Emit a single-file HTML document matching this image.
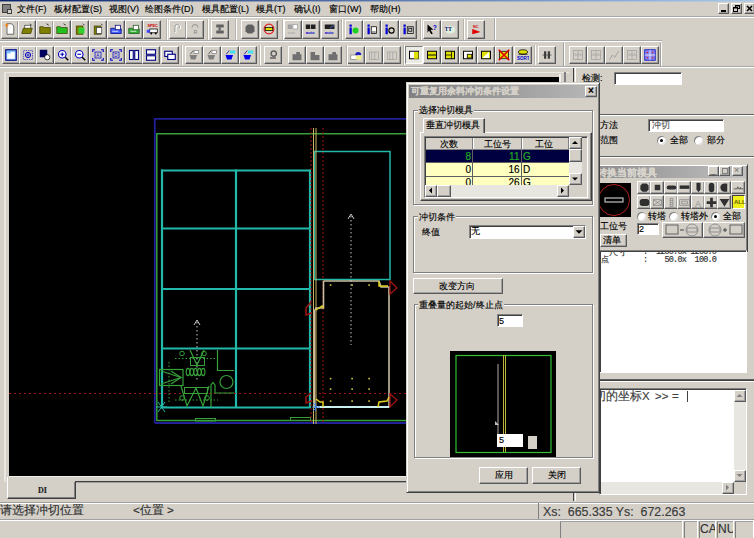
<!DOCTYPE html><html><head><meta charset="utf-8"><style>
html,body{margin:0;padding:0;}
body{width:754px;height:538px;overflow:hidden;position:relative;background:#d4d0c8;font-family:"Liberation Sans", sans-serif;-webkit-text-stroke:0.15px;}
</style></head><body>
<div style="position:absolute;left:0px;top:0px;width:754px;height:1px;background:linear-gradient(90deg,#0a246a,#a6caf0)"></div>
<div style="position:absolute;left:0px;top:1px;width:754px;height:1px;background:linear-gradient(90deg,#0a246a,#a6caf0);opacity:0.45"></div>
<div style="position:absolute;left:0px;top:16px;width:754px;height:1px;background:#a8a8a8"></div>
<div style="position:absolute;left:0px;top:17px;width:754px;height:1px;background:#fff"></div>
<div style="position:absolute;left:2px;top:4px;width:9px;height:9px;background:#808080;border:1px solid #404040;box-sizing:border-box"></div>
<div style="position:absolute;left:7px;top:9px;width:5px;height:5px;background:#d4d0c8;border:1px solid #404040;box-sizing:border-box"></div>
<div style="position:absolute;left:17px;top:5px;font-size:9px;line-height:1;color:#000;white-space:nowrap;">文件(F)</div>
<div style="position:absolute;left:54px;top:5px;font-size:9px;line-height:1;color:#000;white-space:nowrap;">板材配置(S)</div>
<div style="position:absolute;left:109px;top:5px;font-size:9px;line-height:1;color:#000;white-space:nowrap;">视图(V)</div>
<div style="position:absolute;left:145px;top:5px;font-size:9px;line-height:1;color:#000;white-space:nowrap;">绘图条件(D)</div>
<div style="position:absolute;left:202px;top:5px;font-size:9px;line-height:1;color:#000;white-space:nowrap;">模具配置(L)</div>
<div style="position:absolute;left:256px;top:5px;font-size:9px;line-height:1;color:#000;white-space:nowrap;">模具(T)</div>
<div style="position:absolute;left:294px;top:5px;font-size:9px;line-height:1;color:#000;white-space:nowrap;">确认(I)</div>
<div style="position:absolute;left:329px;top:5px;font-size:9px;line-height:1;color:#000;white-space:nowrap;">窗口(W)</div>
<div style="position:absolute;left:370px;top:5px;font-size:9px;line-height:1;color:#000;white-space:nowrap;">帮助(H)</div>
<div style="position:absolute;left:718px;top:3px;width:11px;height:11px;box-sizing:border-box;background:#d4d0c8;border-top:1px solid #fff;border-left:1px solid #fff;border-right:1px solid #5a5a5a;border-bottom:1px solid #5a5a5a;box-shadow:inset -1px -1px 0 #a0a0a0"></div>
<div style="position:absolute;left:731px;top:3px;width:11px;height:11px;box-sizing:border-box;background:#d4d0c8;border-top:1px solid #fff;border-left:1px solid #fff;border-right:1px solid #5a5a5a;border-bottom:1px solid #5a5a5a;box-shadow:inset -1px -1px 0 #a0a0a0"></div>
<div style="position:absolute;left:744px;top:3px;width:11px;height:11px;box-sizing:border-box;background:#d4d0c8;border-top:1px solid #fff;border-left:1px solid #fff;border-right:1px solid #5a5a5a;border-bottom:1px solid #5a5a5a;box-shadow:inset -1px -1px 0 #a0a0a0"></div>
<div style="position:absolute;left:721px;top:10px;width:5px;height:2px;background:#000"></div>
<svg style="position:absolute;left:731px;top:3px" width="11" height="11"><rect x="4.5" y="2.5" width="4" height="3" fill="none" stroke="#000"/><rect x="2.5" y="4.5" width="4" height="4" fill="#d4d0c8" stroke="#000"/><path d="M2 5h5M4 3h5" stroke="#000"/></svg>
<svg style="position:absolute;left:744px;top:3px" width="11" height="11"><path d="M3 3l5 5M8 3l-5 5" stroke="#000" stroke-width="1.6"/></svg>
<div style="position:absolute;left:0px;top:40px;width:662px;height:1px;background:#a8a8a8"></div>
<div style="position:absolute;left:0px;top:41px;width:662px;height:1px;background:#fff"></div>
<div style="position:absolute;left:0px;top:66px;width:754px;height:1px;background:#a8a8a8"></div>
<div style="position:absolute;left:0px;top:67px;width:754px;height:1px;background:#fff"></div>
<div style="position:absolute;left:494px;top:18px;width:1px;height:22px;background:#a8a8a8"></div>
<div style="position:absolute;left:495px;top:18px;width:1px;height:22px;background:#fff"></div>
<div style="position:absolute;left:1px;top:20px;width:18px;height:19px;box-sizing:border-box;background:#d4d0c8;border-top:1px solid #fff;border-left:1px solid #fff;border-right:1px solid #5a5a5a;border-bottom:1px solid #5a5a5a;box-shadow:inset -1px -1px 0 #a0a0a0"></div>
<div style="position:absolute;left:18px;top:20px;width:18px;height:19px;box-sizing:border-box;background:#d4d0c8;border-top:1px solid #fff;border-left:1px solid #fff;border-right:1px solid #5a5a5a;border-bottom:1px solid #5a5a5a;box-shadow:inset -1px -1px 0 #a0a0a0"></div>
<div style="position:absolute;left:36px;top:20px;width:18px;height:19px;box-sizing:border-box;background:#d4d0c8;border-top:1px solid #fff;border-left:1px solid #fff;border-right:1px solid #5a5a5a;border-bottom:1px solid #5a5a5a;box-shadow:inset -1px -1px 0 #a0a0a0"></div>
<div style="position:absolute;left:53px;top:20px;width:18px;height:19px;box-sizing:border-box;background:#d4d0c8;border-top:1px solid #fff;border-left:1px solid #fff;border-right:1px solid #5a5a5a;border-bottom:1px solid #5a5a5a;box-shadow:inset -1px -1px 0 #a0a0a0"></div>
<div style="position:absolute;left:71px;top:20px;width:18px;height:19px;box-sizing:border-box;background:#d4d0c8;border-top:1px solid #fff;border-left:1px solid #fff;border-right:1px solid #5a5a5a;border-bottom:1px solid #5a5a5a;box-shadow:inset -1px -1px 0 #a0a0a0"></div>
<div style="position:absolute;left:89px;top:20px;width:18px;height:19px;box-sizing:border-box;background:#d4d0c8;border-top:1px solid #fff;border-left:1px solid #fff;border-right:1px solid #5a5a5a;border-bottom:1px solid #5a5a5a;box-shadow:inset -1px -1px 0 #a0a0a0"></div>
<div style="position:absolute;left:107px;top:20px;width:18px;height:19px;box-sizing:border-box;background:#d4d0c8;border-top:1px solid #fff;border-left:1px solid #fff;border-right:1px solid #5a5a5a;border-bottom:1px solid #5a5a5a;box-shadow:inset -1px -1px 0 #a0a0a0"></div>
<div style="position:absolute;left:125px;top:20px;width:18px;height:19px;box-sizing:border-box;background:#d4d0c8;border-top:1px solid #fff;border-left:1px solid #fff;border-right:1px solid #5a5a5a;border-bottom:1px solid #5a5a5a;box-shadow:inset -1px -1px 0 #a0a0a0"></div>
<div style="position:absolute;left:143px;top:20px;width:18px;height:19px;box-sizing:border-box;background:#d4d0c8;border-top:1px solid #fff;border-left:1px solid #fff;border-right:1px solid #5a5a5a;border-bottom:1px solid #5a5a5a;box-shadow:inset -1px -1px 0 #a0a0a0"></div>
<div style="position:absolute;left:169px;top:20px;width:18px;height:19px;box-sizing:border-box;background:#d4d0c8;border-top:1px solid #fff;border-left:1px solid #fff;border-right:1px solid #5a5a5a;border-bottom:1px solid #5a5a5a;box-shadow:inset -1px -1px 0 #a0a0a0"></div>
<div style="position:absolute;left:186px;top:20px;width:18px;height:19px;box-sizing:border-box;background:#d4d0c8;border-top:1px solid #fff;border-left:1px solid #fff;border-right:1px solid #5a5a5a;border-bottom:1px solid #5a5a5a;box-shadow:inset -1px -1px 0 #a0a0a0"></div>
<div style="position:absolute;left:211px;top:20px;width:18px;height:19px;box-sizing:border-box;background:#d4d0c8;border-top:1px solid #fff;border-left:1px solid #fff;border-right:1px solid #5a5a5a;border-bottom:1px solid #5a5a5a;box-shadow:inset -1px -1px 0 #a0a0a0"></div>
<div style="position:absolute;left:241px;top:20px;width:18px;height:19px;box-sizing:border-box;background:#d4d0c8;border-top:1px solid #fff;border-left:1px solid #fff;border-right:1px solid #5a5a5a;border-bottom:1px solid #5a5a5a;box-shadow:inset -1px -1px 0 #a0a0a0"></div>
<div style="position:absolute;left:260px;top:20px;width:18px;height:19px;box-sizing:border-box;background:#d4d0c8;border-top:1px solid #fff;border-left:1px solid #fff;border-right:1px solid #5a5a5a;border-bottom:1px solid #5a5a5a;box-shadow:inset -1px -1px 0 #a0a0a0"></div>
<div style="position:absolute;left:284px;top:20px;width:18px;height:19px;box-sizing:border-box;background:#d4d0c8;border-top:1px solid #fff;border-left:1px solid #fff;border-right:1px solid #5a5a5a;border-bottom:1px solid #5a5a5a;box-shadow:inset -1px -1px 0 #a0a0a0"></div>
<div style="position:absolute;left:302px;top:20px;width:18px;height:19px;box-sizing:border-box;background:#d4d0c8;border-top:1px solid #fff;border-left:1px solid #fff;border-right:1px solid #5a5a5a;border-bottom:1px solid #5a5a5a;box-shadow:inset -1px -1px 0 #a0a0a0"></div>
<div style="position:absolute;left:321px;top:20px;width:18px;height:19px;box-sizing:border-box;background:#d4d0c8;border-top:1px solid #fff;border-left:1px solid #fff;border-right:1px solid #5a5a5a;border-bottom:1px solid #5a5a5a;box-shadow:inset -1px -1px 0 #a0a0a0"></div>
<div style="position:absolute;left:345px;top:20px;width:18px;height:19px;box-sizing:border-box;background:#d4d0c8;border-top:1px solid #fff;border-left:1px solid #fff;border-right:1px solid #5a5a5a;border-bottom:1px solid #5a5a5a;box-shadow:inset -1px -1px 0 #a0a0a0"></div>
<div style="position:absolute;left:363px;top:20px;width:18px;height:19px;box-sizing:border-box;background:#d4d0c8;border-top:1px solid #fff;border-left:1px solid #fff;border-right:1px solid #5a5a5a;border-bottom:1px solid #5a5a5a;box-shadow:inset -1px -1px 0 #a0a0a0"></div>
<div style="position:absolute;left:381px;top:20px;width:18px;height:19px;box-sizing:border-box;background:#d4d0c8;border-top:1px solid #fff;border-left:1px solid #fff;border-right:1px solid #5a5a5a;border-bottom:1px solid #5a5a5a;box-shadow:inset -1px -1px 0 #a0a0a0"></div>
<div style="position:absolute;left:399px;top:20px;width:18px;height:19px;box-sizing:border-box;background:#d4d0c8;border-top:1px solid #fff;border-left:1px solid #fff;border-right:1px solid #5a5a5a;border-bottom:1px solid #5a5a5a;box-shadow:inset -1px -1px 0 #a0a0a0"></div>
<div style="position:absolute;left:423px;top:20px;width:18px;height:19px;box-sizing:border-box;background:#d4d0c8;border-top:1px solid #fff;border-left:1px solid #fff;border-right:1px solid #5a5a5a;border-bottom:1px solid #5a5a5a;box-shadow:inset -1px -1px 0 #a0a0a0"></div>
<div style="position:absolute;left:441px;top:20px;width:18px;height:19px;box-sizing:border-box;background:#d4d0c8;border-top:1px solid #fff;border-left:1px solid #fff;border-right:1px solid #5a5a5a;border-bottom:1px solid #5a5a5a;box-shadow:inset -1px -1px 0 #a0a0a0"></div>
<div style="position:absolute;left:467px;top:20px;width:18px;height:19px;box-sizing:border-box;background:#d4d0c8;border-top:1px solid #fff;border-left:1px solid #fff;border-right:1px solid #5a5a5a;border-bottom:1px solid #5a5a5a;box-shadow:inset -1px -1px 0 #a0a0a0"></div>
<div style="position:absolute;left:166px;top:19px;width:1px;height:21px;background:#b8b4ac"></div>
<div style="position:absolute;left:167px;top:19px;width:1px;height:21px;background:#fff"></div>
<div style="position:absolute;left:207px;top:19px;width:1px;height:21px;background:#b8b4ac"></div>
<div style="position:absolute;left:208px;top:19px;width:1px;height:21px;background:#fff"></div>
<div style="position:absolute;left:235px;top:19px;width:1px;height:21px;background:#b8b4ac"></div>
<div style="position:absolute;left:236px;top:19px;width:1px;height:21px;background:#fff"></div>
<div style="position:absolute;left:282px;top:19px;width:1px;height:21px;background:#b8b4ac"></div>
<div style="position:absolute;left:283px;top:19px;width:1px;height:21px;background:#fff"></div>
<div style="position:absolute;left:341px;top:19px;width:1px;height:21px;background:#b8b4ac"></div>
<div style="position:absolute;left:342px;top:19px;width:1px;height:21px;background:#fff"></div>
<div style="position:absolute;left:420px;top:19px;width:1px;height:21px;background:#b8b4ac"></div>
<div style="position:absolute;left:421px;top:19px;width:1px;height:21px;background:#fff"></div>
<div style="position:absolute;left:463px;top:19px;width:1px;height:21px;background:#b8b4ac"></div>
<div style="position:absolute;left:464px;top:19px;width:1px;height:21px;background:#fff"></div>
<div style="position:absolute;left:2px;top:46px;width:18px;height:18px;box-sizing:border-box;background:#d4d0c8;border-top:1px solid #fff;border-left:1px solid #fff;border-right:1px solid #5a5a5a;border-bottom:1px solid #5a5a5a;box-shadow:inset -1px -1px 0 #a0a0a0"></div>
<div style="position:absolute;left:19px;top:46px;width:18px;height:18px;box-sizing:border-box;background:#d4d0c8;border-top:1px solid #fff;border-left:1px solid #fff;border-right:1px solid #5a5a5a;border-bottom:1px solid #5a5a5a;box-shadow:inset -1px -1px 0 #a0a0a0"></div>
<div style="position:absolute;left:36px;top:46px;width:18px;height:18px;box-sizing:border-box;background:#d4d0c8;border-top:1px solid #fff;border-left:1px solid #fff;border-right:1px solid #5a5a5a;border-bottom:1px solid #5a5a5a;box-shadow:inset -1px -1px 0 #a0a0a0"></div>
<div style="position:absolute;left:54px;top:46px;width:18px;height:18px;box-sizing:border-box;background:#d4d0c8;border-top:1px solid #fff;border-left:1px solid #fff;border-right:1px solid #5a5a5a;border-bottom:1px solid #5a5a5a;box-shadow:inset -1px -1px 0 #a0a0a0"></div>
<div style="position:absolute;left:71px;top:46px;width:18px;height:18px;box-sizing:border-box;background:#d4d0c8;border-top:1px solid #fff;border-left:1px solid #fff;border-right:1px solid #5a5a5a;border-bottom:1px solid #5a5a5a;box-shadow:inset -1px -1px 0 #a0a0a0"></div>
<div style="position:absolute;left:89px;top:46px;width:18px;height:18px;box-sizing:border-box;background:#d4d0c8;border-top:1px solid #fff;border-left:1px solid #fff;border-right:1px solid #5a5a5a;border-bottom:1px solid #5a5a5a;box-shadow:inset -1px -1px 0 #a0a0a0"></div>
<div style="position:absolute;left:107px;top:46px;width:18px;height:18px;box-sizing:border-box;background:#d4d0c8;border-top:1px solid #fff;border-left:1px solid #fff;border-right:1px solid #5a5a5a;border-bottom:1px solid #5a5a5a;box-shadow:inset -1px -1px 0 #a0a0a0"></div>
<div style="position:absolute;left:125px;top:46px;width:18px;height:18px;box-sizing:border-box;background:#d4d0c8;border-top:1px solid #fff;border-left:1px solid #fff;border-right:1px solid #5a5a5a;border-bottom:1px solid #5a5a5a;box-shadow:inset -1px -1px 0 #a0a0a0"></div>
<div style="position:absolute;left:142px;top:46px;width:18px;height:18px;box-sizing:border-box;background:#d4d0c8;border-top:1px solid #fff;border-left:1px solid #fff;border-right:1px solid #5a5a5a;border-bottom:1px solid #5a5a5a;box-shadow:inset -1px -1px 0 #a0a0a0"></div>
<div style="position:absolute;left:161px;top:46px;width:18px;height:18px;box-sizing:border-box;background:#d4d0c8;border-top:1px solid #fff;border-left:1px solid #fff;border-right:1px solid #5a5a5a;border-bottom:1px solid #5a5a5a;box-shadow:inset -1px -1px 0 #a0a0a0"></div>
<div style="position:absolute;left:185px;top:46px;width:18px;height:18px;box-sizing:border-box;background:#d4d0c8;border-top:1px solid #fff;border-left:1px solid #fff;border-right:1px solid #5a5a5a;border-bottom:1px solid #5a5a5a;box-shadow:inset -1px -1px 0 #a0a0a0"></div>
<div style="position:absolute;left:203px;top:46px;width:18px;height:18px;box-sizing:border-box;background:#d4d0c8;border-top:1px solid #fff;border-left:1px solid #fff;border-right:1px solid #5a5a5a;border-bottom:1px solid #5a5a5a;box-shadow:inset -1px -1px 0 #a0a0a0"></div>
<div style="position:absolute;left:221px;top:46px;width:18px;height:18px;box-sizing:border-box;background:#d4d0c8;border-top:1px solid #fff;border-left:1px solid #fff;border-right:1px solid #5a5a5a;border-bottom:1px solid #5a5a5a;box-shadow:inset -1px -1px 0 #a0a0a0"></div>
<div style="position:absolute;left:239px;top:46px;width:18px;height:18px;box-sizing:border-box;background:#d4d0c8;border-top:1px solid #fff;border-left:1px solid #fff;border-right:1px solid #5a5a5a;border-bottom:1px solid #5a5a5a;box-shadow:inset -1px -1px 0 #a0a0a0"></div>
<div style="position:absolute;left:264px;top:46px;width:18px;height:18px;box-sizing:border-box;background:#d4d0c8;border-top:1px solid #fff;border-left:1px solid #fff;border-right:1px solid #5a5a5a;border-bottom:1px solid #5a5a5a;box-shadow:inset -1px -1px 0 #a0a0a0"></div>
<div style="position:absolute;left:288px;top:46px;width:18px;height:18px;box-sizing:border-box;background:#d4d0c8;border-top:1px solid #fff;border-left:1px solid #fff;border-right:1px solid #5a5a5a;border-bottom:1px solid #5a5a5a;box-shadow:inset -1px -1px 0 #a0a0a0"></div>
<div style="position:absolute;left:306px;top:46px;width:18px;height:18px;box-sizing:border-box;background:#d4d0c8;border-top:1px solid #fff;border-left:1px solid #fff;border-right:1px solid #5a5a5a;border-bottom:1px solid #5a5a5a;box-shadow:inset -1px -1px 0 #a0a0a0"></div>
<div style="position:absolute;left:324px;top:46px;width:18px;height:18px;box-sizing:border-box;background:#d4d0c8;border-top:1px solid #fff;border-left:1px solid #fff;border-right:1px solid #5a5a5a;border-bottom:1px solid #5a5a5a;box-shadow:inset -1px -1px 0 #a0a0a0"></div>
<div style="position:absolute;left:347px;top:46px;width:18px;height:18px;box-sizing:border-box;background:#d4d0c8;border-top:1px solid #fff;border-left:1px solid #fff;border-right:1px solid #5a5a5a;border-bottom:1px solid #5a5a5a;box-shadow:inset -1px -1px 0 #a0a0a0"></div>
<div style="position:absolute;left:365px;top:46px;width:18px;height:18px;box-sizing:border-box;background:#d4d0c8;border-top:1px solid #fff;border-left:1px solid #fff;border-right:1px solid #5a5a5a;border-bottom:1px solid #5a5a5a;box-shadow:inset -1px -1px 0 #a0a0a0"></div>
<div style="position:absolute;left:383px;top:46px;width:18px;height:18px;box-sizing:border-box;background:#d4d0c8;border-top:1px solid #fff;border-left:1px solid #fff;border-right:1px solid #5a5a5a;border-bottom:1px solid #5a5a5a;box-shadow:inset -1px -1px 0 #a0a0a0"></div>
<div style="position:absolute;left:405px;top:46px;width:18px;height:18px;box-sizing:border-box;background:#d4d0c8;border-top:1px solid #fff;border-left:1px solid #fff;border-right:1px solid #5a5a5a;border-bottom:1px solid #5a5a5a;box-shadow:inset -1px -1px 0 #a0a0a0"></div>
<div style="position:absolute;left:423px;top:46px;width:18px;height:18px;box-sizing:border-box;background:#d4d0c8;border-top:1px solid #fff;border-left:1px solid #fff;border-right:1px solid #5a5a5a;border-bottom:1px solid #5a5a5a;box-shadow:inset -1px -1px 0 #a0a0a0"></div>
<div style="position:absolute;left:441px;top:46px;width:18px;height:18px;box-sizing:border-box;background:#d4d0c8;border-top:1px solid #fff;border-left:1px solid #fff;border-right:1px solid #5a5a5a;border-bottom:1px solid #5a5a5a;box-shadow:inset -1px -1px 0 #a0a0a0"></div>
<div style="position:absolute;left:459px;top:46px;width:18px;height:18px;box-sizing:border-box;background:#d4d0c8;border-top:1px solid #fff;border-left:1px solid #fff;border-right:1px solid #5a5a5a;border-bottom:1px solid #5a5a5a;box-shadow:inset -1px -1px 0 #a0a0a0"></div>
<div style="position:absolute;left:477px;top:46px;width:18px;height:18px;box-sizing:border-box;background:#d4d0c8;border-top:1px solid #fff;border-left:1px solid #fff;border-right:1px solid #5a5a5a;border-bottom:1px solid #5a5a5a;box-shadow:inset -1px -1px 0 #a0a0a0"></div>
<div style="position:absolute;left:495px;top:46px;width:18px;height:18px;box-sizing:border-box;background:#d4d0c8;border-top:1px solid #fff;border-left:1px solid #fff;border-right:1px solid #5a5a5a;border-bottom:1px solid #5a5a5a;box-shadow:inset -1px -1px 0 #a0a0a0"></div>
<div style="position:absolute;left:514px;top:46px;width:18px;height:18px;box-sizing:border-box;background:#d4d0c8;border-top:1px solid #fff;border-left:1px solid #fff;border-right:1px solid #5a5a5a;border-bottom:1px solid #5a5a5a;box-shadow:inset -1px -1px 0 #a0a0a0"></div>
<div style="position:absolute;left:538px;top:46px;width:18px;height:18px;box-sizing:border-box;background:#d4d0c8;border-top:1px solid #fff;border-left:1px solid #fff;border-right:1px solid #5a5a5a;border-bottom:1px solid #5a5a5a;box-shadow:inset -1px -1px 0 #a0a0a0"></div>
<div style="position:absolute;left:405px;top:46px;width:18px;height:18px;box-sizing:border-box;background:#eceae4;border-top:1px solid #808080;border-left:1px solid #808080;border-right:1px solid #fff;border-bottom:1px solid #fff"></div>
<div style="position:absolute;left:181px;top:45px;width:1px;height:20px;background:#b8b4ac"></div>
<div style="position:absolute;left:182px;top:45px;width:1px;height:20px;background:#fff"></div>
<div style="position:absolute;left:259px;top:45px;width:1px;height:20px;background:#b8b4ac"></div>
<div style="position:absolute;left:260px;top:45px;width:1px;height:20px;background:#fff"></div>
<div style="position:absolute;left:346px;top:45px;width:1px;height:20px;background:#b8b4ac"></div>
<div style="position:absolute;left:347px;top:45px;width:1px;height:20px;background:#fff"></div>
<div style="position:absolute;left:403px;top:45px;width:1px;height:20px;background:#b8b4ac"></div>
<div style="position:absolute;left:404px;top:45px;width:1px;height:20px;background:#fff"></div>
<div style="position:absolute;left:534px;top:45px;width:1px;height:20px;background:#b8b4ac"></div>
<div style="position:absolute;left:535px;top:45px;width:1px;height:20px;background:#fff"></div>
<div style="position:absolute;left:569px;top:46px;width:18px;height:18px;box-sizing:border-box;background:#d4d0c8;border-top:1px solid #fff;border-left:1px solid #fff;border-right:1px solid #5a5a5a;border-bottom:1px solid #5a5a5a;box-shadow:inset -1px -1px 0 #a0a0a0"></div>
<div style="position:absolute;left:587px;top:46px;width:18px;height:18px;box-sizing:border-box;background:#d4d0c8;border-top:1px solid #fff;border-left:1px solid #fff;border-right:1px solid #5a5a5a;border-bottom:1px solid #5a5a5a;box-shadow:inset -1px -1px 0 #a0a0a0"></div>
<div style="position:absolute;left:605px;top:46px;width:18px;height:18px;box-sizing:border-box;background:#d4d0c8;border-top:1px solid #fff;border-left:1px solid #fff;border-right:1px solid #5a5a5a;border-bottom:1px solid #5a5a5a;box-shadow:inset -1px -1px 0 #a0a0a0"></div>
<div style="position:absolute;left:623px;top:46px;width:18px;height:18px;box-sizing:border-box;background:#d4d0c8;border-top:1px solid #fff;border-left:1px solid #fff;border-right:1px solid #5a5a5a;border-bottom:1px solid #5a5a5a;box-shadow:inset -1px -1px 0 #a0a0a0"></div>
<div style="position:absolute;left:641px;top:46px;width:18px;height:18px;box-sizing:border-box;background:#d4d0c8;border-top:1px solid #fff;border-left:1px solid #fff;border-right:1px solid #5a5a5a;border-bottom:1px solid #5a5a5a;box-shadow:inset -1px -1px 0 #a0a0a0"></div>
<div style="position:absolute;left:563px;top:43px;width:1px;height:23px;background:#a0a0a0"></div>
<div style="position:absolute;left:564px;top:43px;width:1px;height:23px;background:#fff"></div>
<div style="position:absolute;left:660px;top:43px;width:1px;height:23px;background:#a0a0a0"></div>
<div style="position:absolute;left:661px;top:43px;width:1px;height:23px;background:#fff"></div>
<svg style="position:absolute;left:4px;top:23px" width="12" height="12" viewBox="0 0 16 16"><path d="M4 1h6l3 3v11H4z" fill="#fff" stroke="#404040"/><path d="M1 3h5M3.5 0.5v5" stroke="#ff8000" stroke-width="1.5"/></svg>
<svg style="position:absolute;left:21px;top:23px" width="12" height="12" viewBox="0 0 16 16"><rect x="5" y="3" width="8" height="7" fill="#fff" stroke="#404040"/><path d="M1 14l2-7h12l-2 7z" fill="#808000" stroke="#404000"/><path d="M12 1l2 2" stroke="#000"/></svg>
<svg style="position:absolute;left:39px;top:23px" width="12" height="12" viewBox="0 0 16 16"><path d="M1 5h5l1 1h8v8H1z" fill="#808000" stroke="#404000"/><path d="M10 1l3 2" stroke="#000"/></svg>
<svg style="position:absolute;left:56px;top:23px" width="12" height="12" viewBox="0 0 16 16"><path d="M1 5h5l1 1h8v8H1z" fill="#20c020" stroke="#404000"/><path d="M10 1l3 2" stroke="#000"/></svg>
<svg style="position:absolute;left:74px;top:23px" width="12" height="12" viewBox="0 0 16 16"><rect x="3" y="4" width="9" height="11" fill="#808000" stroke="#404000"/><rect x="6" y="6" width="8" height="8" fill="#30d030"/><path d="M12 1l2 2" stroke="#000"/></svg>
<svg style="position:absolute;left:92px;top:23px" width="12" height="12" viewBox="0 0 16 16"><rect x="3" y="4" width="9" height="11" fill="#808000" stroke="#404000"/><rect x="6" y="6" width="7" height="8" fill="#fff" stroke="#404040"/><path d="M12 1l2 2" stroke="#000"/></svg>
<svg style="position:absolute;left:110px;top:23px" width="12" height="12" viewBox="0 0 16 16"><path d="M1 7h5l1 1h8v6H1z" fill="#4060ff" stroke="#000080"/><rect x="7" y="3" width="7" height="6" fill="#fff" stroke="#000080"/><path d="M3 11h8" stroke="#fff"/></svg>
<svg style="position:absolute;left:128px;top:23px" width="12" height="12" viewBox="0 0 16 16"><path d="M1 7h5l1 1h8v6H1z" fill="#30b030" stroke="#205020"/><rect x="7" y="3" width="7" height="6" fill="#fff" stroke="#205020"/><path d="M3 11h8" stroke="#fff"/></svg>
<svg style="position:absolute;left:146px;top:23px" width="12" height="12" viewBox="0 0 16 16"><text x="2" y="5" font-size="5" fill="#d00000" font-family="Liberation Sans" font-weight="bold">SPEC</text><rect x="5" y="8" width="10" height="5" fill="#fff" stroke="#000"/><rect x="1" y="9" width="4" height="4" fill="#4040ff"/><circle cx="7" cy="14" r="1.3" fill="#000"/><circle cx="13" cy="14" r="1.3" fill="#000"/></svg>
<svg style="position:absolute;left:172px;top:23px" width="12" height="12" viewBox="0 0 16 16"><path d="M5 13V6a3 3 0 0 1 6 0v2" fill="none" stroke="#fff" stroke-width="2"/><path d="M4 12V5a3 3 0 0 1 6 0v2" fill="none" stroke="#808080"/></svg>
<svg style="position:absolute;left:189px;top:23px" width="12" height="12" viewBox="0 0 16 16"><path d="M4 6a4 4 0 0 1 8 0" fill="none" stroke="#808080"/><text x="6" y="14" font-size="7" fill="#808080" font-family="Liberation Sans">R</text></svg>
<svg style="position:absolute;left:214px;top:23px" width="12" height="12" viewBox="0 0 16 16"><rect x="3" y="2" width="10" height="4" fill="#606060"/><rect x="6" y="6" width="3" height="4" fill="#606060"/><rect x="3" y="10" width="10" height="4" fill="#606060"/></svg>
<svg style="position:absolute;left:244px;top:23px" width="12" height="12" viewBox="0 0 16 16"><path d="M5 2h6l3 3v6l-3 3H5l-3-3V5z" fill="#606060"/></svg>
<svg style="position:absolute;left:263px;top:23px" width="12" height="12" viewBox="0 0 16 16"><circle cx="8" cy="8" r="6.5" fill="none" stroke="#e02020" stroke-width="1.5"/><rect x="3" y="6" width="10" height="4" fill="#e0e000" stroke="#000"/></svg>
<svg style="position:absolute;left:287px;top:23px" width="12" height="12" viewBox="0 0 16 16"><rect x="1" y="2" width="6" height="6" fill="#a0a0a0"/><rect x="8" y="2" width="6" height="6" fill="#fff" stroke="#a0a0a0"/><text x="1" y="15" font-size="5" fill="#a0a0a0" font-family="Liberation Sans">auto</text></svg>
<svg style="position:absolute;left:305px;top:23px" width="12" height="12" viewBox="0 0 16 16"><rect x="1" y="2" width="6" height="6" fill="#202020"/><rect x="8" y="2" width="6" height="6" fill="#202020"/><text x="1" y="15" font-size="5.5" fill="#0000d0" font-weight="bold" font-family="Liberation Sans">auto</text></svg>
<svg style="position:absolute;left:324px;top:23px" width="12" height="12" viewBox="0 0 16 16"><rect x="1" y="2" width="13" height="6" fill="#202020"/><path d="M8 7l5-4" stroke="#6080ff"/><text x="1" y="15" font-size="5.5" fill="#0000d0" font-weight="bold" font-family="Liberation Sans">auto</text></svg>
<svg style="position:absolute;left:348px;top:23px" width="12" height="12" viewBox="0 0 16 16"><rect x="2" y="6" width="3" height="9" fill="#0000d0"/><rect x="2" y="2" width="3" height="3" fill="#0000d0"/><circle cx="10" cy="10" r="4" fill="#20d020"/></svg>
<svg style="position:absolute;left:366px;top:23px" width="12" height="12" viewBox="0 0 16 16"><rect x="2" y="6" width="3" height="9" fill="#0000d0"/><rect x="2" y="2" width="3" height="3" fill="#0000d0"/><rect x="7" y="5" width="7" height="9" fill="#fff" stroke="#000"/><path d="M8 12h5" stroke="#000"/></svg>
<svg style="position:absolute;left:384px;top:23px" width="12" height="12" viewBox="0 0 16 16"><rect x="2" y="6" width="3" height="9" fill="#0000d0"/><rect x="2" y="2" width="3" height="3" fill="#0000d0"/><circle cx="10" cy="10" r="3.5" fill="none" stroke="#000" stroke-width="1.5"/></svg>
<svg style="position:absolute;left:402px;top:23px" width="12" height="12" viewBox="0 0 16 16"><rect x="2" y="6" width="3" height="9" fill="#0000d0"/><rect x="2" y="2" width="3" height="3" fill="#0000d0"/><rect x="7" y="5" width="8" height="9" fill="#d0d0d0" stroke="#000"/><rect x="9" y="7" width="4" height="4" fill="none" stroke="#000"/></svg>
<svg style="position:absolute;left:426px;top:23px" width="12" height="12" viewBox="0 0 16 16"><path d="M2 2l8 7H6l3 5-2 1-3-5-2 3z" fill="#000"/><text x="9" y="9" font-size="9" fill="#0000d0" font-weight="bold" font-family="Liberation Sans">?</text></svg>
<svg style="position:absolute;left:444px;top:23px" width="12" height="12" viewBox="0 0 16 16"><ellipse cx="8" cy="9" rx="7" ry="5" fill="#e0f0e0"/><text x="1" y="11" font-size="7" fill="#000060" font-weight="bold" font-family="Liberation Serif">TT</text></svg>
<svg style="position:absolute;left:470px;top:23px" width="12" height="12" viewBox="0 0 16 16"><text x="4" y="6" font-size="5" fill="#d00000" font-weight="bold" font-family="Liberation Sans">NC</text><path d="M3 8l11 4-11 3z" fill="#e00000"/></svg>
<svg style="position:absolute;left:5px;top:49px" width="12" height="12" viewBox="0 0 16 16"><rect x="1" y="1" width="14" height="14" fill="#80c0ff" stroke="#000080" stroke-width="1.5"/><path d="M3 6h4l1-2h5v9H3z" fill="#fff"/></svg>
<svg style="position:absolute;left:22px;top:49px" width="12" height="12" viewBox="0 0 16 16"><rect x="2" y="2" width="12" height="12" fill="none" stroke="#4040c0" stroke-dasharray="2,1"/><circle cx="8" cy="8" r="3.5" fill="none" stroke="#0000c0" stroke-width="1.3"/><path d="M6 8h4M8 6v4" stroke="#0000c0"/></svg>
<svg style="position:absolute;left:39px;top:49px" width="12" height="12" viewBox="0 0 16 16"><rect x="1" y="1" width="10" height="10" fill="#000060"/><circle cx="11" cy="11" r="3.5" fill="#fff" stroke="#000"/></svg>
<svg style="position:absolute;left:57px;top:49px" width="12" height="12" viewBox="0 0 16 16"><circle cx="7" cy="7" r="5" fill="#fff" stroke="#0000c0" stroke-width="1.5"/><path d="M4.5 7h5M7 4.5v5" stroke="#0000c0" stroke-width="1.5"/><path d="M11 11l4 4" stroke="#000" stroke-width="2"/></svg>
<svg style="position:absolute;left:74px;top:49px" width="12" height="12" viewBox="0 0 16 16"><circle cx="7" cy="7" r="5" fill="#fff" stroke="#0000c0" stroke-width="1.5"/><path d="M4.5 7h5" stroke="#0000c0" stroke-width="1.5"/><path d="M11 11l4 4" stroke="#000" stroke-width="2"/></svg>
<svg style="position:absolute;left:92px;top:49px" width="12" height="12" viewBox="0 0 16 16"><path d="M1 4V1h3M12 1h3v3M15 12v3h-3M4 15H1v-3" fill="none" stroke="#0000c0" stroke-width="1.5"/><rect x="4" y="4" width="8" height="8" fill="none" stroke="#0000c0"/><text x="5.5" y="11" font-size="6" fill="#0000c0" font-family="Liberation Sans">A</text></svg>
<svg style="position:absolute;left:110px;top:49px" width="12" height="12" viewBox="0 0 16 16"><path d="M1 4V1h3M12 1h3v3M15 12v3h-3M4 15H1v-3" fill="none" stroke="#0000c0" stroke-width="1.5"/><rect x="4" y="4" width="8" height="8" fill="none" stroke="#0000c0"/><text x="5.5" y="11" font-size="6" fill="#0000c0" font-family="Liberation Sans">D</text></svg>
<svg style="position:absolute;left:128px;top:49px" width="12" height="12" viewBox="0 0 16 16"><rect x="2" y="2" width="5" height="12" fill="#fff" stroke="#000080" stroke-width="1.5"/><rect x="9" y="2" width="5" height="12" fill="#fff" stroke="#000080" stroke-width="1.5"/></svg>
<svg style="position:absolute;left:145px;top:49px" width="12" height="12" viewBox="0 0 16 16"><rect x="2" y="1" width="12" height="6" fill="#fff" stroke="#000080" stroke-width="1.5"/><rect x="2" y="9" width="12" height="6" fill="#fff" stroke="#000080" stroke-width="1.5"/></svg>
<svg style="position:absolute;left:164px;top:49px" width="12" height="12" viewBox="0 0 16 16"><rect x="1" y="3" width="10" height="7" fill="#fff" stroke="#000080" stroke-width="1.5"/><rect x="5" y="7" width="10" height="7" fill="#fff" stroke="#000080" stroke-width="1.5"/></svg>
<svg style="position:absolute;left:188px;top:49px" width="12" height="12" viewBox="0 0 16 16"><path d="M2 8h10l-2 6H4z" fill="#808080"/><path d="M3 7l4-5" stroke="#404040"/><rect x="8" y="2" width="6" height="4" fill="#fff" stroke="#808080"/></svg>
<svg style="position:absolute;left:206px;top:49px" width="12" height="12" viewBox="0 0 16 16"><path d="M2 8h10l-2 6H4z" fill="#808080"/><path d="M3 7l4-5" stroke="#404040"/><rect x="8" y="2" width="6" height="4" fill="#fff" stroke="#808080"/></svg>
<svg style="position:absolute;left:224px;top:49px" width="12" height="12" viewBox="0 0 16 16"><path d="M2 8h10l-2 6H4z" fill="#0000f0"/><path d="M3 7l4-5" stroke="#000080"/><rect x="8" y="2" width="7" height="4" fill="#40e0f0"/></svg>
<svg style="position:absolute;left:242px;top:49px" width="12" height="12" viewBox="0 0 16 16"><path d="M2 8h10l-2 6H4z" fill="#0000f0"/><path d="M3 7l4-5" stroke="#000080"/><rect x="8" y="2" width="7" height="4" fill="#40e0f0"/></svg>
<svg style="position:absolute;left:267px;top:49px" width="12" height="12" viewBox="0 0 16 16"><circle cx="9" cy="6" r="3.5" fill="none" stroke="#606060" stroke-width="2"/><path d="M4 12h8" stroke="#606060" stroke-width="2"/></svg>
<svg style="position:absolute;left:291px;top:49px" width="12" height="12" viewBox="0 0 16 16"><path d="M2 7h5V4h5v3h2v8H2z" fill="#707070"/></svg>
<svg style="position:absolute;left:309px;top:49px" width="12" height="12" viewBox="0 0 16 16"><path d="M2 4h6v4h6v7H2z" fill="#707070"/></svg>
<svg style="position:absolute;left:327px;top:49px" width="12" height="12" viewBox="0 0 16 16"><path d="M2 7h5V4h5v3h2v8H2z" fill="#707070"/></svg>
<svg style="position:absolute;left:350px;top:49px" width="12" height="12" viewBox="0 0 16 16"><rect x="1" y="8" width="8" height="6" fill="#fff" stroke="#808080"/><path d="M7 8a4 4 0 0 1 8 0z" fill="#2020c0"/><rect x="8" y="9" width="7" height="5" fill="#f0f080"/></svg>
<svg style="position:absolute;left:368px;top:49px" width="12" height="12" viewBox="0 0 16 16"><rect x="2" y="4" width="12" height="10" fill="none" stroke="#a0a0a0"/><path d="M5 4v10M9 4v10" stroke="#a0a0a0"/></svg>
<svg style="position:absolute;left:386px;top:49px" width="12" height="12" viewBox="0 0 16 16"><rect x="2" y="4" width="12" height="10" fill="none" stroke="#a0a0a0"/><path d="M5 4v10M9 4v10" stroke="#a0a0a0"/></svg>
<svg style="position:absolute;left:408px;top:49px" width="12" height="12" viewBox="0 0 16 16"><rect x="2" y="3" width="12" height="10" fill="#fff" stroke="#000" stroke-width="1.3"/><rect x="8" y="4" width="6" height="9" fill="#e0e000"/></svg>
<svg style="position:absolute;left:426px;top:49px" width="12" height="12" viewBox="0 0 16 16"><rect x="2" y="3" width="12" height="10" fill="#e0e000" stroke="#000" stroke-width="1.3"/><path d="M2 8h12" stroke="#000" stroke-width="1.3"/></svg>
<svg style="position:absolute;left:444px;top:49px" width="12" height="12" viewBox="0 0 16 16"><rect x="2" y="3" width="12" height="10" fill="#e0e000" stroke="#000" stroke-width="1.3"/><path d="M2 8h8M10 3v10" stroke="#000"/></svg>
<svg style="position:absolute;left:462px;top:49px" width="12" height="12" viewBox="0 0 16 16"><rect x="2" y="3" width="12" height="10" fill="#fff" stroke="#000" stroke-width="1.3"/><rect x="7" y="7" width="6" height="5" fill="#e0e000" stroke="#000"/></svg>
<svg style="position:absolute;left:480px;top:49px" width="12" height="12" viewBox="0 0 16 16"><rect x="2" y="3" width="12" height="10" fill="#e0e000" stroke="#000" stroke-width="1.3"/><path d="M3 12l9-8v8z" fill="#fff"/></svg>
<svg style="position:absolute;left:498px;top:49px" width="12" height="12" viewBox="0 0 16 16"><rect x="2" y="3" width="12" height="10" fill="#e0e000" stroke="#000"/><path d="M1 1l14 14M15 1L1 15" stroke="#e00000" stroke-width="2.2"/></svg>
<svg style="position:absolute;left:517px;top:49px" width="12" height="12" viewBox="0 0 16 16"><ellipse cx="8" cy="4" rx="6" ry="3" fill="#e0e000" stroke="#000"/><path d="M2 7h12" stroke="#000"/><text x="0" y="15" font-size="6" fill="#0000d0" font-weight="bold" font-family="Liberation Sans">SORT</text></svg>
<svg style="position:absolute;left:541px;top:49px" width="12" height="12" viewBox="0 0 16 16"><rect x="4" y="3" width="3" height="10" fill="#404040"/><rect x="9" y="3" width="3" height="10" fill="#404040"/><path d="M2 8h12" stroke="#404040"/></svg>
<svg style="position:absolute;left:572px;top:49px" width="12" height="12" viewBox="0 0 16 16"><rect x="2" y="2" width="12" height="12" fill="none" stroke="#a0a0a0"/><path d="M8 2v12M2 8h12" stroke="#a0a0a0"/><path d="M4 5l2 2M10 5l2 2" stroke="#a0a0a0"/></svg>
<svg style="position:absolute;left:590px;top:49px" width="12" height="12" viewBox="0 0 16 16"><rect x="2" y="2" width="12" height="12" fill="none" stroke="#a0a0a0"/><path d="M8 2v12M2 8h12" stroke="#a0a0a0"/><path d="M4 5l2 2M10 5l2 2" stroke="#a0a0a0"/></svg>
<svg style="position:absolute;left:608px;top:49px" width="12" height="12" viewBox="0 0 16 16"><path d="M2 14l4-6 3 3 5-8" fill="none" stroke="#a0a0a0" stroke-width="1.3"/></svg>
<svg style="position:absolute;left:626px;top:49px" width="12" height="12" viewBox="0 0 16 16"><rect x="2" y="2" width="12" height="12" fill="none" stroke="#a0a0a0"/><path d="M8 2v12M2 8h12" stroke="#a0a0a0"/><path d="M4 5l2 2M10 5l2 2" stroke="#a0a0a0"/></svg>
<svg style="position:absolute;left:644px;top:49px" width="12" height="12" viewBox="0 0 16 16"><rect x="1" y="1" width="14" height="14" fill="#8080f0" stroke="#0000c0"/><path d="M8 1v14M1 8h14" stroke="#fff"/><circle cx="4.5" cy="4.5" r="1" fill="#e02020"/><circle cx="11.5" cy="4.5" r="1" fill="#e02020"/><circle cx="4.5" cy="11.5" r="1" fill="#e02020"/><circle cx="11.5" cy="11.5" r="1" fill="#e02020"/></svg>
<div style="position:absolute;left:4px;top:72px;width:565px;height:1px;background:#ebe9e4"></div>
<div style="position:absolute;left:4px;top:72px;width:2px;height:410px;background:#e8e6e0"></div>
<div style="position:absolute;left:9px;top:77px;width:550px;height:399px;background:#000"></div>
<div style="position:absolute;left:559px;top:74px;width:2px;height:405px;background:#f4f2ee"></div>
<svg style="position:absolute;left:0;top:0" width="754" height="538" viewBox="0 0 754 538"><defs><clipPath id="cv"><rect x="9" y="77" width="550" height="399"/></clipPath></defs><g clip-path="url(#cv)"><polyline points="154.8,423 154.8,118.8 560,118.8" stroke="#20209a" stroke-width="1.8" fill="none"/><line x1="154.8" y1="423" x2="560" y2="423" stroke="#20209a" stroke-width="1.8"/><polyline points="156.8,421 156.8,133.8 560,133.8" stroke="#36a03a" stroke-width="1.5" fill="none"/><line x1="156.8" y1="420.5" x2="560" y2="420.5" stroke="#36a03a" stroke-width="1.5"/><rect x="195.5" y="418.5" width="20" height="2.5" stroke="#36a03a" stroke-width="1" fill="none"/><rect x="290.5" y="417.5" width="20" height="3" stroke="#36a03a" stroke-width="1" fill="none"/><line x1="162.0" y1="169.5" x2="162.0" y2="408" stroke="#22b8aa" stroke-width="2.2"/><line x1="236.0" y1="169.5" x2="236.0" y2="408" stroke="#22b8aa" stroke-width="2.2"/><line x1="310.0" y1="169.5" x2="310.0" y2="408" stroke="#22b8aa" stroke-width="2.2"/><line x1="161" y1="170.5" x2="310" y2="170.5" stroke="#22b8aa" stroke-width="2"/><line x1="161" y1="228.5" x2="310" y2="228.5" stroke="#22b8aa" stroke-width="2"/><line x1="161" y1="289" x2="310" y2="289" stroke="#22b8aa" stroke-width="2"/><line x1="161" y1="348.5" x2="310" y2="348.5" stroke="#22b8aa" stroke-width="2"/><line x1="161" y1="407.5" x2="310" y2="407.5" stroke="#22b8aa" stroke-width="2"/><rect x="314.5" y="151.5" width="75.5" height="128" stroke="#22b8aa" stroke-width="1.5" fill="none"/><line x1="311" y1="128" x2="311" y2="424" stroke="#a01414" stroke-width="1" stroke-dasharray="2,2"/><line x1="323" y1="128" x2="323" y2="424" stroke="#a01414" stroke-width="1" stroke-dasharray="2,2"/><line x1="313.5" y1="128" x2="313.5" y2="424" stroke="#c8b464" stroke-width="1"/><line x1="316" y1="128" x2="316" y2="424" stroke="#c8b464" stroke-width="1"/><line x1="9" y1="393.5" x2="560" y2="393.5" stroke="#a01414" stroke-width="1" stroke-dasharray="2,3"/><polyline points="323.5,281 379,281 381,287 389,287 389,407 314.5,407 314.5,311 316,308 323.5,308 323.5,281" stroke="#c8c0a0" stroke-width="1.6" fill="none"/><polyline points="379,281 379,286 388,286" stroke="#e0d020" stroke-width="1.5" fill="none"/><polyline points="316,310 322,306 323.5,308" stroke="#e0d020" stroke-width="1.5" fill="none"/><line x1="314.5" y1="407" x2="389" y2="407" stroke="#c8f0f0" stroke-width="2"/><path d="M311 302 L306 308 L306 315 L312 313" stroke="#a01414" stroke-width="1.5" fill="none"/><path d="M390 281 L397 288 L390 294 Z" stroke="#a01414" stroke-width="1.3" fill="none"/><path d="M311 393 L306 397 L306 403 L312 401" stroke="#a01414" stroke-width="1.5" fill="none"/><path d="M390 394 L397 400 L390 407 Z" stroke="#a01414" stroke-width="1.3" fill="none"/><polyline points="316,399 320,402 323,402 323,407" stroke="#e0d020" stroke-width="1.5" fill="none"/><polyline points="378,407 379,402 387,401 389,397" stroke="#e0d020" stroke-width="1.5" fill="none"/><polyline points="313,403 317,407 313,411 M317,407" stroke="#4080e0" stroke-width="1" fill="none"/><line x1="312" y1="407" x2="320" y2="407" stroke="#4080e0" stroke-width="1"/><line x1="315.5" y1="403" x2="315.5" y2="411" stroke="#4080e0" stroke-width="1"/><rect x="329.8" y="284.3" width="1.6" height="1.6" fill="#d8c840"/><rect x="351.3" y="284.3" width="1.6" height="1.6" fill="#d8c840"/><rect x="368.3" y="284.3" width="1.6" height="1.6" fill="#d8c840"/><rect x="329.8" y="377.8" width="1.6" height="1.6" fill="#d8c840"/><rect x="351.3" y="377.8" width="1.6" height="1.6" fill="#d8c840"/><rect x="368.3" y="377.8" width="1.6" height="1.6" fill="#d8c840"/><rect x="329.8" y="388.3" width="1.6" height="1.6" fill="#d8c840"/><rect x="351.3" y="388.3" width="1.6" height="1.6" fill="#d8c840"/><rect x="368.3" y="388.3" width="1.6" height="1.6" fill="#d8c840"/><rect x="329.8" y="400.3" width="1.6" height="1.6" fill="#d8c840"/><rect x="351.3" y="400.3" width="1.6" height="1.6" fill="#d8c840"/><rect x="368.3" y="400.3" width="1.6" height="1.6" fill="#d8c840"/><line x1="197" y1="322" x2="197" y2="380" stroke="#c8c8c8" stroke-width="1" stroke-dasharray="1.5,2.5"/><polyline points="194,325 197,320 200,325" stroke="#c8c8c8" stroke-width="1" fill="none"/><line x1="351" y1="216" x2="351" y2="345" stroke="#c8c8c8" stroke-width="1" stroke-dasharray="1.5,2.5"/><polyline points="348,219 351,214 354,219" stroke="#c8c8c8" stroke-width="1" fill="none"/><rect x="159.5" y="369.5" width="23.5" height="16" stroke="#36a03a" stroke-width="1.2" fill="none"/><polyline points="161,371 181,377.5 161,384" stroke="#36a03a" stroke-width="1.2" fill="none"/><polyline points="171,371 181,377.5 171,384" stroke="#36a03a" stroke-width="1.2" fill="none"/><ellipse cx="188.0" cy="372" rx="1.8" ry="3.6" stroke="#36a03a" fill="none" stroke-width="1.1"/><ellipse cx="191.8" cy="372" rx="1.8" ry="3.6" stroke="#36a03a" fill="none" stroke-width="1.1"/><ellipse cx="195.6" cy="372" rx="1.8" ry="3.6" stroke="#36a03a" fill="none" stroke-width="1.1"/><ellipse cx="199.4" cy="372" rx="1.8" ry="3.6" stroke="#36a03a" fill="none" stroke-width="1.1"/><ellipse cx="203.2" cy="372" rx="1.8" ry="3.6" stroke="#36a03a" fill="none" stroke-width="1.1"/><polyline points="190,350 197,365 204,350" stroke="#36a03a" stroke-width="1.2" fill="none"/><rect x="190.5" y="357.5" width="14" height="8" stroke="#36a03a" stroke-width="1" fill="none"/><circle cx="182" cy="353.5" r="2.3" stroke="#36a03a" stroke-width="1" fill="none"/><circle cx="204" cy="353.5" r="2.3" stroke="#36a03a" stroke-width="1" fill="none"/><line x1="175" y1="358.5" x2="218" y2="358.5" stroke="#36a03a" stroke-width="1" stroke-dasharray="1.5,2"/><polyline points="217.5,350 217.5,370.5 234,370.5" stroke="#36a03a" stroke-width="1.2" fill="none"/><circle cx="226.5" cy="382" r="6.5" stroke="#36a03a" stroke-width="1.2" fill="none"/><polyline points="211,407 211,385 213,382.5 215,385 215,393 234,393" stroke="#36a03a" stroke-width="1.2" fill="none"/><polyline points="181,386 187,406 196,388 203,406 209,386" stroke="#36a03a" stroke-width="1.2" fill="none"/><rect x="184.5" y="387.5" width="23" height="6" stroke="#36a03a" stroke-width="1" fill="none"/><circle cx="182" cy="398" r="2.3" stroke="#36a03a" stroke-width="1" fill="none"/><circle cx="207" cy="398" r="2.3" stroke="#36a03a" stroke-width="1" fill="none"/><line x1="169" y1="362" x2="169" y2="404" stroke="#36a03a" stroke-width="1" stroke-dasharray="1.5,2"/><line x1="175" y1="400" x2="218" y2="400" stroke="#36a03a" stroke-width="1" stroke-dasharray="1.5,2"/><polyline points="158,402 165,412" stroke="#22b8aa" stroke-width="1" fill="none"/><polyline points="165,402 158,412" stroke="#22b8aa" stroke-width="1" fill="none"/><line x1="156" y1="407" x2="167" y2="407" stroke="#22b8aa" stroke-width="1"/></g></svg>
<div style="position:absolute;left:564px;top:72px;width:2px;height:410px;background:#808080"></div>
<div style="position:absolute;left:573px;top:68px;width:1px;height:433px;background:#404040"></div>
<div style="position:absolute;left:575px;top:68px;width:1px;height:433px;background:#fff"></div>
<div style="position:absolute;left:9px;top:476px;width:551px;height:1px;background:#f0eee8"></div>
<div style="position:absolute;left:7px;top:477px;width:69px;height:22px;box-sizing:border-box;background:#d4d0c8;border-left:1px solid #fff;border-bottom:1px solid #404040;box-shadow:inset 0 -1px 0 #808080"></div>
<div style="position:absolute;left:75px;top:481px;width:1px;height:18px;background:#404040"></div>
<div style="position:absolute;left:74px;top:482px;width:1px;height:16px;background:#808080"></div>
<div style="position:absolute;left:38px;top:487px;font-size:8px;line-height:1;color:#202020;white-space:nowrap;font-family:Liberation Serif,serif;font-weight:bold">DI</div>
<div style="position:absolute;left:75px;top:481px;width:491px;height:1px;background:#404040"></div>
<div style="position:absolute;left:76px;top:482px;width:490px;height:1px;background:#a0a0a0"></div>
<div style="position:absolute;left:582px;top:74px;font-size:9px;line-height:1;color:#000;white-space:nowrap;">检测:</div>
<div style="position:absolute;left:614px;top:72px;width:68px;height:13px;box-sizing:border-box;background:#fff;border-top:1px solid #808080;border-left:1px solid #808080;border-right:1px solid #fff;border-bottom:1px solid #fff;box-shadow:inset 1px 1px 0 #404040;"></div>
<div style="position:absolute;left:575px;top:114px;width:179px;height:1px;background:#606060"></div>
<div style="position:absolute;left:575px;top:115px;width:179px;height:1px;background:#fff"></div>
<div style="position:absolute;left:600px;top:121px;font-size:9px;line-height:1;color:#000;white-space:nowrap;">方法</div>
<div style="position:absolute;left:648px;top:119px;width:76px;height:13px;box-sizing:border-box;background:#fff;border-top:1px solid #808080;border-left:1px solid #808080;border-right:1px solid #fff;border-bottom:1px solid #fff;box-shadow:inset 1px 1px 0 #404040;"></div>
<div style="position:absolute;left:652px;top:121px;font-size:9px;line-height:1;color:#505050;white-space:nowrap;">冲切</div>
<div style="position:absolute;left:600px;top:136px;font-size:9px;line-height:1;color:#000;white-space:nowrap;">范围</div>
<div style="position:absolute;left:657px;top:136px;width:9px;height:9px;border-radius:50%;background:#fff;box-shadow:inset 1px 1px 0 #808080, inset -1px -1px 0 #e0e0e0;box-sizing:border-box"></div>
<div style="position:absolute;left:660px;top:139px;width:3px;height:3px;background:#000;border-radius:50%"></div>
<div style="position:absolute;left:670px;top:136px;font-size:9px;line-height:1;color:#000;white-space:nowrap;">全部</div>
<div style="position:absolute;left:694px;top:136px;width:9px;height:9px;border-radius:50%;background:#fff;box-shadow:inset 1px 1px 0 #808080, inset -1px -1px 0 #e0e0e0;box-sizing:border-box"></div>
<div style="position:absolute;left:707px;top:136px;font-size:9px;line-height:1;color:#000;white-space:nowrap;">部分</div>
<div style="position:absolute;left:575px;top:156px;width:179px;height:1px;background:#606060"></div>
<div style="position:absolute;left:575px;top:157px;width:179px;height:1px;background:#fff"></div>
<div style="position:absolute;left:560px;top:164px;width:188px;height:88px;box-sizing:border-box;background:#d4d0c8;border-top:1px solid #d4d0c8;border-left:1px solid #d4d0c8;border-right:1px solid #404040;border-bottom:1px solid #404040;box-shadow:inset 1px 1px 0 #fff, inset -1px -1px 0 #808080"></div>
<div style="position:absolute;left:562px;top:166px;width:184px;height:12px;background:linear-gradient(90deg,#808080,#c0c0c0)"></div>
<div style="position:absolute;left:597px;top:168px;font-size:9.5px;line-height:1;color:#d8d4cc;white-space:nowrap;font-weight:bold">转换当前模具</div>
<div style="position:absolute;left:708px;top:166px;width:11px;height:10px;box-sizing:border-box;background:#d4d0c8;border-top:1px solid #fff;border-left:1px solid #fff;border-right:1px solid #5a5a5a;border-bottom:1px solid #5a5a5a;box-shadow:inset -1px -1px 0 #a0a0a0"></div>
<div style="position:absolute;left:719px;top:166px;width:11px;height:10px;box-sizing:border-box;background:#d4d0c8;border-top:1px solid #fff;border-left:1px solid #fff;border-right:1px solid #5a5a5a;border-bottom:1px solid #5a5a5a;box-shadow:inset -1px -1px 0 #a0a0a0"></div>
<div style="position:absolute;left:732px;top:166px;width:11px;height:10px;box-sizing:border-box;background:#d4d0c8;border-top:1px solid #fff;border-left:1px solid #fff;border-right:1px solid #5a5a5a;border-bottom:1px solid #5a5a5a;box-shadow:inset -1px -1px 0 #a0a0a0"></div>
<div style="position:absolute;left:711px;top:167px;font-size:8px;line-height:1;color:#404040;white-space:nowrap;">_</div>
<div style="position:absolute;left:722px;top:168px;width:6px;height:6px;border:1px solid #808080;box-sizing:border-box"></div>
<div style="position:absolute;left:734px;top:166px;font-size:9px;line-height:1;color:#808080;white-space:nowrap;">×</div>
<div style="position:absolute;left:599px;top:183px;width:32px;height:34px;background:#000"></div>
<svg style="position:absolute;left:599px;top:183px" width="32" height="34"><circle cx="15" cy="17" r="15.5" stroke="#b02020" stroke-width="1" fill="none"/><rect x="6" y="15" width="18" height="4" stroke="#c0c0c0" fill="none" stroke-width="1.2"/></svg>
<div style="position:absolute;left:637px;top:181px;width:14px;height:13px;box-sizing:border-box;background:#d4d0c8;border-top:1px solid #fff;border-left:1px solid #fff;border-right:1px solid #5a5a5a;border-bottom:1px solid #5a5a5a;box-shadow:inset -1px -1px 0 #a0a0a0"></div>
<svg style="position:absolute;left:638.5px;top:181.5px" width="11" height="11" viewBox="0 0 16 16"><path d="M5 2h6l3 3v6l-3 3H5l-3-3V5z" fill="#303030"/></svg>
<div style="position:absolute;left:637px;top:195px;width:14px;height:14px;box-sizing:border-box;background:#d4d0c8;border-top:1px solid #fff;border-left:1px solid #fff;border-right:1px solid #5a5a5a;border-bottom:1px solid #5a5a5a;box-shadow:inset -1px -1px 0 #a0a0a0"></div>
<svg style="position:absolute;left:638.5px;top:196.5px" width="11" height="11" viewBox="0 0 16 16"><rect x="1" y="3" width="14" height="10" rx="4" fill="#303030"/></svg>
<div style="position:absolute;left:650px;top:181px;width:14px;height:13px;box-sizing:border-box;background:#d4d0c8;border-top:1px solid #fff;border-left:1px solid #fff;border-right:1px solid #5a5a5a;border-bottom:1px solid #5a5a5a;box-shadow:inset -1px -1px 0 #a0a0a0"></div>
<svg style="position:absolute;left:651.5px;top:181.5px" width="11" height="11" viewBox="0 0 16 16"><rect x="4" y="4" width="8" height="8" fill="#303030"/></svg>
<div style="position:absolute;left:650px;top:195px;width:14px;height:14px;box-sizing:border-box;background:#d4d0c8;border-top:1px solid #fff;border-left:1px solid #fff;border-right:1px solid #5a5a5a;border-bottom:1px solid #5a5a5a;box-shadow:inset -1px -1px 0 #a0a0a0"></div>
<svg style="position:absolute;left:651.5px;top:196.5px" width="11" height="11" viewBox="0 0 16 16"><rect x="2" y="4" width="12" height="8" fill="none" stroke="#808080"/><path d="M2 4l12 8M14 4L2 12" stroke="#808080"/></svg>
<div style="position:absolute;left:664px;top:181px;width:14px;height:13px;box-sizing:border-box;background:#d4d0c8;border-top:1px solid #fff;border-left:1px solid #fff;border-right:1px solid #5a5a5a;border-bottom:1px solid #5a5a5a;box-shadow:inset -1px -1px 0 #a0a0a0"></div>
<svg style="position:absolute;left:665.5px;top:181.5px" width="11" height="11" viewBox="0 0 16 16"><rect x="1" y="5" width="14" height="6" rx="3" fill="#303030"/></svg>
<div style="position:absolute;left:664px;top:195px;width:14px;height:14px;box-sizing:border-box;background:#d4d0c8;border-top:1px solid #fff;border-left:1px solid #fff;border-right:1px solid #5a5a5a;border-bottom:1px solid #5a5a5a;box-shadow:inset -1px -1px 0 #a0a0a0"></div>
<svg style="position:absolute;left:665.5px;top:196.5px" width="11" height="11" viewBox="0 0 16 16"><path d="M6 2h4v12H6z" fill="none" stroke="#808080"/><path d="M6 5h4M6 8h4M6 11h4" stroke="#808080"/></svg>
<div style="position:absolute;left:677px;top:181px;width:14px;height:13px;box-sizing:border-box;background:#d4d0c8;border-top:1px solid #fff;border-left:1px solid #fff;border-right:1px solid #5a5a5a;border-bottom:1px solid #5a5a5a;box-shadow:inset -1px -1px 0 #a0a0a0"></div>
<svg style="position:absolute;left:678.5px;top:181.5px" width="11" height="11" viewBox="0 0 16 16"><rect x="1" y="5" width="14" height="5" fill="#303030"/></svg>
<div style="position:absolute;left:677px;top:195px;width:14px;height:14px;box-sizing:border-box;background:#d4d0c8;border-top:1px solid #fff;border-left:1px solid #fff;border-right:1px solid #5a5a5a;border-bottom:1px solid #5a5a5a;box-shadow:inset -1px -1px 0 #a0a0a0"></div>
<svg style="position:absolute;left:678.5px;top:196.5px" width="11" height="11" viewBox="0 0 16 16"><rect x="1" y="4" width="14" height="8" fill="none" stroke="#808080"/><rect x="4" y="6" width="8" height="4" fill="none" stroke="#808080"/></svg>
<div style="position:absolute;left:691px;top:181px;width:14px;height:13px;box-sizing:border-box;background:#d4d0c8;border-top:1px solid #fff;border-left:1px solid #fff;border-right:1px solid #5a5a5a;border-bottom:1px solid #5a5a5a;box-shadow:inset -1px -1px 0 #a0a0a0"></div>
<svg style="position:absolute;left:692.5px;top:181.5px" width="11" height="11" viewBox="0 0 16 16"><path d="M5 1h6v10l-3 4-3-4z" fill="#303030"/></svg>
<div style="position:absolute;left:691px;top:195px;width:14px;height:14px;box-sizing:border-box;background:#d4d0c8;border-top:1px solid #fff;border-left:1px solid #fff;border-right:1px solid #5a5a5a;border-bottom:1px solid #5a5a5a;box-shadow:inset -1px -1px 0 #a0a0a0"></div>
<svg style="position:absolute;left:692.5px;top:196.5px" width="11" height="11" viewBox="0 0 16 16"><text x="3" y="14" font-size="13" fill="#909090" font-family="Liberation Sans">A</text></svg>
<div style="position:absolute;left:704px;top:181px;width:14px;height:13px;box-sizing:border-box;background:#d4d0c8;border-top:1px solid #fff;border-left:1px solid #fff;border-right:1px solid #5a5a5a;border-bottom:1px solid #5a5a5a;box-shadow:inset -1px -1px 0 #a0a0a0"></div>
<svg style="position:absolute;left:705.5px;top:181.5px" width="11" height="11" viewBox="0 0 16 16"><rect x="4" y="1" width="8" height="14" rx="4" fill="#303030"/></svg>
<div style="position:absolute;left:704px;top:195px;width:14px;height:14px;box-sizing:border-box;background:#d4d0c8;border-top:1px solid #fff;border-left:1px solid #fff;border-right:1px solid #5a5a5a;border-bottom:1px solid #5a5a5a;box-shadow:inset -1px -1px 0 #a0a0a0"></div>
<svg style="position:absolute;left:705.5px;top:196.5px" width="11" height="11" viewBox="0 0 16 16"><path d="M6 1h4v5h5v4h-5v5H6v-5H1V6h5z" fill="#303030"/></svg>
<div style="position:absolute;left:717px;top:181px;width:14px;height:13px;box-sizing:border-box;background:#d4d0c8;border-top:1px solid #fff;border-left:1px solid #fff;border-right:1px solid #5a5a5a;border-bottom:1px solid #5a5a5a;box-shadow:inset -1px -1px 0 #a0a0a0"></div>
<svg style="position:absolute;left:718.5px;top:181.5px" width="11" height="11" viewBox="0 0 16 16"><path d="M12 2v12H8a6 6 0 0 1 0-12z" fill="#303030"/></svg>
<div style="position:absolute;left:717px;top:195px;width:14px;height:14px;box-sizing:border-box;background:#d4d0c8;border-top:1px solid #fff;border-left:1px solid #fff;border-right:1px solid #5a5a5a;border-bottom:1px solid #5a5a5a;box-shadow:inset -1px -1px 0 #a0a0a0"></div>
<svg style="position:absolute;left:718.5px;top:196.5px" width="11" height="11" viewBox="0 0 16 16"><path d="M1 3h14L8 14z" fill="#303030"/></svg>
<div style="position:absolute;left:731px;top:181px;width:14px;height:13px;box-sizing:border-box;background:#d4d0c8;border-top:1px solid #fff;border-left:1px solid #fff;border-right:1px solid #5a5a5a;border-bottom:1px solid #5a5a5a;box-shadow:inset -1px -1px 0 #a0a0a0"></div>
<svg style="position:absolute;left:732.5px;top:181.5px" width="11" height="11" viewBox="0 0 16 16"><path d="M1 10h5l1-3 1 3h2l1-2v2h4" fill="none" stroke="#303030"/></svg>
<div style="position:absolute;left:732px;top:195px;width:13px;height:14px;box-sizing:border-box;background:#f0f020;border-top:1px solid #404040;border-left:1px solid #404040;border-right:1px solid #fff;border-bottom:1px solid #fff"></div>
<div style="position:absolute;left:734px;top:199px;font-size:6px;line-height:1;color:#707000;white-space:nowrap;font-weight:bold">ALL</div>
<div style="position:absolute;left:637px;top:212px;width:9px;height:9px;border-radius:50%;background:#fff;box-shadow:inset 1px 1px 0 #808080, inset -1px -1px 0 #e0e0e0;box-sizing:border-box"></div>
<div style="position:absolute;left:648px;top:212px;font-size:9px;line-height:1;color:#000;white-space:nowrap;">转塔</div>
<div style="position:absolute;left:669px;top:212px;width:9px;height:9px;border-radius:50%;background:#fff;box-shadow:inset 1px 1px 0 #808080, inset -1px -1px 0 #e0e0e0;box-sizing:border-box"></div>
<div style="position:absolute;left:681px;top:212px;font-size:9px;line-height:1;color:#000;white-space:nowrap;">转塔外</div>
<div style="position:absolute;left:711px;top:212px;width:9px;height:9px;border-radius:50%;background:#fff;box-shadow:inset 1px 1px 0 #808080, inset -1px -1px 0 #e0e0e0;box-sizing:border-box"></div>
<div style="position:absolute;left:714px;top:215px;width:3px;height:3px;background:#000;border-radius:50%"></div>
<div style="position:absolute;left:723px;top:212px;font-size:9px;line-height:1;color:#000;white-space:nowrap;">全部</div>
<div style="position:absolute;left:600px;top:222px;font-size:9px;line-height:1;color:#000;white-space:nowrap;">工位号</div>
<div style="position:absolute;left:637px;top:223px;width:22px;height:12px;box-sizing:border-box;background:#fff;border-top:1px solid #808080;border-left:1px solid #808080;border-right:1px solid #fff;border-bottom:1px solid #fff;box-shadow:inset 1px 1px 0 #404040;"></div>
<div style="position:absolute;left:639px;top:225px;font-size:9px;line-height:1;color:#000;white-space:nowrap;">2</div>
<div style="position:absolute;left:662px;top:222px;width:41px;height:16px;box-sizing:border-box;background:#d4d0c8;border-top:1px solid #fff;border-left:1px solid #fff;border-right:1px solid #5a5a5a;border-bottom:1px solid #5a5a5a;box-shadow:inset -1px -1px 0 #a0a0a0"></div>
<div style="position:absolute;left:703px;top:222px;width:42px;height:16px;box-sizing:border-box;background:#d4d0c8;border-top:1px solid #fff;border-left:1px solid #fff;border-right:1px solid #5a5a5a;border-bottom:1px solid #5a5a5a;box-shadow:inset -1px -1px 0 #a0a0a0"></div>
<svg style="position:absolute;left:662px;top:222px" width="84" height="16"><rect x="4" y="3" width="12" height="9" fill="none" stroke="#606060"/><path d="M18 8h4" stroke="#404040"/><circle cx="30" cy="8" r="6" fill="none" stroke="#909090"/><rect x="25" y="6" width="10" height="4" fill="none" stroke="#909090"/><circle cx="53" cy="8" r="6" fill="none" stroke="#909090"/><rect x="48" y="6" width="10" height="4" fill="none" stroke="#909090"/><path d="M61 8h4M63 6v4" stroke="#404040"/><rect x="68" y="3" width="12" height="9" fill="none" stroke="#606060"/></svg>
<div style="position:absolute;left:600px;top:234px;width:27px;height:13px;box-sizing:border-box;background:#d4d0c8;border-top:1px solid #fff;border-left:1px solid #fff;border-right:1px solid #5a5a5a;border-bottom:1px solid #5a5a5a;box-shadow:inset -1px -1px 0 #a0a0a0"></div>
<div style="position:absolute;left:603px;top:236px;font-size:9px;line-height:1;color:#000;white-space:nowrap;">清单</div>
<div style="position:absolute;left:599px;top:250px;width:148px;height:123px;box-sizing:border-box;background:#fff;border-top:1px solid #808080;border-left:1px solid #808080;border-right:1px solid #fff;border-bottom:1px solid #fff;box-shadow:inset 1px 1px 0 #404040;"></div>
<div style="position:absolute;left:601px;top:252px;width:144px;height:119px;overflow:hidden"><div style="position:absolute;left:8px;top:-4px;font-size:8.5px;line-height:1;white-space:nowrap;color:#303030">尺寸</div><div style="position:absolute;left:42px;top:-4px;font-size:8.5px;letter-spacing:-0.8px;line-height:1;white-space:nowrap;color:#303030;font-family:Liberation Mono,monospace">:&nbsp;&nbsp;1200.0x&nbsp;1200.0</div><div style="position:absolute;left:0px;top:4px;font-size:8px;line-height:1;white-space:nowrap;color:#303030">点</div><div style="position:absolute;left:42px;top:4px;font-size:8.5px;letter-spacing:-0.8px;line-height:1;white-space:nowrap;color:#303030;font-family:Liberation Mono,monospace">:&nbsp;&nbsp;&nbsp;&nbsp;50.0x&nbsp;&nbsp;100.0</div></div>
<div style="position:absolute;left:575px;top:379px;width:179px;height:1px;background:#606060"></div>
<div style="position:absolute;left:575px;top:380px;width:179px;height:1px;background:#404040"></div>
<div style="position:absolute;left:575px;top:381px;width:179px;height:1px;background:#fff"></div>
<div style="position:absolute;left:599px;top:388px;width:148px;height:107px;box-sizing:border-box;background:#fff;border-top:1px solid #808080;border-left:1px solid #808080;border-right:1px solid #fff;border-bottom:1px solid #fff;box-shadow:inset 1px 1px 0 #404040;"></div>
<div style="position:absolute;left:594px;top:391px;font-size:11.5px;line-height:1;color:#404040;white-space:nowrap;">切的坐标X</div>
<div style="position:absolute;left:655px;top:391px;font-size:11.5px;line-height:1;color:#404040;white-space:nowrap;">&gt;&gt;</div>
<div style="position:absolute;left:672px;top:391px;font-size:11.5px;line-height:1;color:#404040;white-space:nowrap;">=</div>
<div style="position:absolute;left:687px;top:391px;width:1px;height:11px;background:#404040"></div>
<div style="position:absolute;left:734px;top:390px;width:12px;height:92px;background:#e8e6e0"></div>
<div style="position:absolute;left:734px;top:390px;width:12px;height:12px;box-sizing:border-box;background:#d4d0c8;border-top:1px solid #fff;border-left:1px solid #fff;border-right:1px solid #5a5a5a;border-bottom:1px solid #5a5a5a;box-shadow:inset -1px -1px 0 #a0a0a0"></div>
<div style="position:absolute;left:734px;top:470px;width:12px;height:12px;box-sizing:border-box;background:#d4d0c8;border-top:1px solid #fff;border-left:1px solid #fff;border-right:1px solid #5a5a5a;border-bottom:1px solid #5a5a5a;box-shadow:inset -1px -1px 0 #a0a0a0"></div>
<div style="position:absolute;left:601px;top:482px;width:133px;height:12px;background:#e8e6e0"></div>
<div style="position:absolute;left:722px;top:482px;width:12px;height:12px;box-sizing:border-box;background:#d4d0c8;border-top:1px solid #fff;border-left:1px solid #fff;border-right:1px solid #5a5a5a;border-bottom:1px solid #5a5a5a;box-shadow:inset -1px -1px 0 #a0a0a0"></div>
<div style="position:absolute;left:734px;top:482px;width:12px;height:12px;background:#d4d0c8"></div>
<svg style="position:absolute;left:0;top:0" width="754" height="538"><polygon points="736.5,397.0 742.5,397.0 739.5,394.0" fill="#808080"/></svg>
<svg style="position:absolute;left:0;top:0" width="754" height="538"><polygon points="736.5,474.0 742.5,474.0 739.5,477.0" fill="#808080"/></svg>
<svg style="position:absolute;left:0;top:0" width="754" height="538"><polygon points="726.0,484.5 726.0,490.5 729.0,487.5" fill="#808080"/></svg>
<div style="position:absolute;left:406px;top:82px;width:194px;height:411px;box-sizing:border-box;background:#d4d0c8;border-top:1px solid #d4d0c8;border-left:1px solid #d4d0c8;border-right:1px solid #404040;border-bottom:1px solid #404040;box-shadow:inset 1px 1px 0 #fff, inset -1px -1px 0 #808080"></div>
<div style="position:absolute;left:409px;top:85px;width:188px;height:13px;background:linear-gradient(90deg,#808080,#b8b8b8)"></div>
<div style="position:absolute;left:411px;top:87px;font-size:9px;line-height:1;color:#d4d0c8;white-space:nowrap;font-weight:bold">可重复用余料冲切条件设置</div>
<div style="position:absolute;left:585px;top:86px;width:12px;height:11px;box-sizing:border-box;background:#d4d0c8;border-top:1px solid #fff;border-left:1px solid #fff;border-right:1px solid #5a5a5a;border-bottom:1px solid #5a5a5a;box-shadow:inset -1px -1px 0 #a0a0a0"></div>
<div style="position:absolute;left:588px;top:86px;font-size:10px;line-height:1;color:#000;white-space:nowrap;font-weight:bold">×</div>
<div style="position:absolute;left:413px;top:110px;width:180px;height:95px;box-sizing:border-box;border:1px solid #808080;box-shadow:1px 1px 0 #fff inset, 1px 1px 0 #fff"></div>
<div style="position:absolute;left:418px;top:106px;font-size:9px;line-height:1;background:#d4d0c8;padding:0 1px;white-space:nowrap">选择冲切模具</div>
<div style="position:absolute;left:420px;top:132px;width:172px;height:69px;box-sizing:border-box;border-top:1px solid #fff;border-left:1px solid #fff;border-right:1px solid #404040;border-bottom:1px solid #404040;box-shadow:inset -1px -1px 0 #808080"></div>
<div style="position:absolute;left:423px;top:118px;width:62px;height:15px;box-sizing:border-box;background:#d4d0c8;border-top:1px solid #fff;border-left:1px solid #fff;border-right:1px solid #404040;box-shadow:inset -1px 0 0 #808080"></div>
<div style="position:absolute;left:426px;top:121px;font-size:9px;line-height:1;color:#000;white-space:nowrap;">垂直冲切模具</div>
<div style="position:absolute;left:424px;top:136px;width:164px;height:62px;box-sizing:border-box;background:#d4d0c8;border-top:1px solid #808080;border-left:1px solid #808080;border-right:1px solid #fff;border-bottom:1px solid #fff;box-shadow:inset 1px 1px 0 #404040;"></div>
<div style="position:absolute;left:426px;top:138px;width:143px;height:12px;background:#d4d0c8"></div>
<div style="position:absolute;left:472px;top:138px;width:1px;height:12px;background:#808080"></div>
<div style="position:absolute;left:473px;top:138px;width:1px;height:12px;background:#fff"></div>
<div style="position:absolute;left:521px;top:138px;width:1px;height:12px;background:#808080"></div>
<div style="position:absolute;left:522px;top:138px;width:1px;height:12px;background:#fff"></div>
<div style="position:absolute;left:568px;top:138px;width:1px;height:12px;background:#808080"></div>
<div style="position:absolute;left:569px;top:138px;width:1px;height:12px;background:#fff"></div>
<div style="position:absolute;left:426px;top:149px;width:143px;height:1px;background:#808080"></div>
<div style="position:absolute;left:440px;top:140px;font-size:9px;line-height:1;color:#000;white-space:nowrap;">次数</div>
<div style="position:absolute;left:484px;top:140px;font-size:9px;line-height:1;color:#000;white-space:nowrap;">工位号</div>
<div style="position:absolute;left:535px;top:140px;font-size:9px;line-height:1;color:#000;white-space:nowrap;">工位</div>
<div style="position:absolute;left:426px;top:150px;width:143px;height:13px;background:#000040"></div>
<div style="position:absolute;left:426px;top:163px;width:143px;height:22px;background:#ffffc0"></div>
<div style="position:absolute;left:426px;top:162px;width:143px;height:1px;background:#606060"></div>
<div style="position:absolute;left:426px;top:176px;width:143px;height:1px;background:#606060"></div>
<div style="position:absolute;left:472px;top:150px;width:1px;height:35px;background:#606060"></div>
<div style="position:absolute;left:521px;top:150px;width:1px;height:35px;background:#606060"></div>
<div style="position:absolute;left:411px;width:60px;text-align:right;top:151.5px;font-size:10px;line-height:1;color:#20b020;white-space:nowrap">8</div>
<div style="position:absolute;left:459.5px;width:60px;text-align:right;top:151.5px;font-size:10px;line-height:1;color:#20b020;white-space:nowrap">11</div>
<div style="position:absolute;left:523px;top:151.5px;font-size:10px;line-height:1;color:#20b020;white-space:nowrap;">G</div>
<div style="position:absolute;left:411px;width:60px;text-align:right;top:164.5px;font-size:10px;line-height:1;color:#000;white-space:nowrap">0</div>
<div style="position:absolute;left:459.5px;width:60px;text-align:right;top:164.5px;font-size:10px;line-height:1;color:#000;white-space:nowrap">16</div>
<div style="position:absolute;left:523px;top:164.5px;font-size:10px;line-height:1;color:#000;white-space:nowrap;">D</div>
<div style="position:absolute;left:411px;width:60px;text-align:right;top:177.5px;font-size:10px;line-height:1;color:#000;white-space:nowrap">0</div>
<div style="position:absolute;left:459.5px;width:60px;text-align:right;top:177.5px;font-size:10px;line-height:1;color:#000;white-space:nowrap">26</div>
<div style="position:absolute;left:523px;top:177.5px;font-size:10px;line-height:1;color:#000;white-space:nowrap;">G</div>
<div style="position:absolute;left:569px;top:138px;width:13px;height:47px;background:#e8e6e0"></div>
<div style="position:absolute;left:569px;top:137px;width:13px;height:12px;box-sizing:border-box;background:#d4d0c8;border-top:1px solid #fff;border-left:1px solid #fff;border-right:1px solid #5a5a5a;border-bottom:1px solid #5a5a5a;box-shadow:inset -1px -1px 0 #a0a0a0"></div>
<div style="position:absolute;left:569px;top:149px;width:13px;height:13px;box-sizing:border-box;background:#d4d0c8;border-top:1px solid #fff;border-left:1px solid #fff;border-right:1px solid #5a5a5a;border-bottom:1px solid #5a5a5a;box-shadow:inset -1px -1px 0 #a0a0a0"></div>
<div style="position:absolute;left:569px;top:173px;width:13px;height:12px;box-sizing:border-box;background:#d4d0c8;border-top:1px solid #fff;border-left:1px solid #fff;border-right:1px solid #5a5a5a;border-bottom:1px solid #5a5a5a;box-shadow:inset -1px -1px 0 #a0a0a0"></div>
<svg style="position:absolute;left:0;top:0" width="754" height="538"><polygon points="572,144.0 578,144.0 575,141.0" fill="#000"/></svg>
<svg style="position:absolute;left:0;top:0" width="754" height="538"><polygon points="572,177.5 578,177.5 575,180.5" fill="#000"/></svg>
<div style="position:absolute;left:426px;top:185px;width:143px;height:12px;background:#e8e6e0"></div>
<div style="position:absolute;left:425px;top:185px;width:12px;height:12px;box-sizing:border-box;background:#d4d0c8;border-top:1px solid #fff;border-left:1px solid #fff;border-right:1px solid #5a5a5a;border-bottom:1px solid #5a5a5a;box-shadow:inset -1px -1px 0 #a0a0a0"></div>
<div style="position:absolute;left:437px;top:185px;width:14px;height:12px;box-sizing:border-box;background:#d4d0c8;border-top:1px solid #fff;border-left:1px solid #fff;border-right:1px solid #5a5a5a;border-bottom:1px solid #5a5a5a;box-shadow:inset -1px -1px 0 #a0a0a0"></div>
<div style="position:absolute;left:557px;top:185px;width:12px;height:12px;box-sizing:border-box;background:#d4d0c8;border-top:1px solid #fff;border-left:1px solid #fff;border-right:1px solid #5a5a5a;border-bottom:1px solid #5a5a5a;box-shadow:inset -1px -1px 0 #a0a0a0"></div>
<svg style="position:absolute;left:0;top:0" width="754" height="538"><polygon points="432.0,187.5 432.0,193.5 429.0,190.5" fill="#000"/></svg>
<svg style="position:absolute;left:0;top:0" width="754" height="538"><polygon points="561.0,187.5 561.0,193.5 564.0,190.5" fill="#000"/></svg>
<div style="position:absolute;left:569px;top:185px;width:13px;height:12px;background:#d4d0c8"></div>
<div style="position:absolute;left:413px;top:216px;width:180px;height:57px;box-sizing:border-box;border:1px solid #808080;box-shadow:1px 1px 0 #fff inset, 1px 1px 0 #fff"></div>
<div style="position:absolute;left:418px;top:213px;font-size:9px;line-height:1;background:#d4d0c8;padding:0 1px;white-space:nowrap">冲切条件</div>
<div style="position:absolute;left:422px;top:228px;font-size:9px;line-height:1;color:#000;white-space:nowrap;">终值</div>
<div style="position:absolute;left:469px;top:225px;width:117px;height:14px;box-sizing:border-box;background:#fff;border-top:1px solid #808080;border-left:1px solid #808080;border-right:1px solid #fff;border-bottom:1px solid #fff;box-shadow:inset 1px 1px 0 #404040;"></div>
<div style="position:absolute;left:471px;top:227px;font-size:9px;line-height:1;color:#000;white-space:nowrap;">无</div>
<div style="position:absolute;left:573px;top:226px;width:12px;height:12px;box-sizing:border-box;background:#d4d0c8;border-top:1px solid #fff;border-left:1px solid #fff;border-right:1px solid #5a5a5a;border-bottom:1px solid #5a5a5a;box-shadow:inset -1px -1px 0 #a0a0a0"></div>
<svg style="position:absolute;left:0;top:0" width="754" height="538"><polygon points="575.5,230.25 582.5,230.25 579,233.75" fill="#000"/></svg>
<div style="position:absolute;left:413px;top:278px;width:90px;height:16px;box-sizing:border-box;background:#d4d0c8;border-top:1px solid #fff;border-left:1px solid #fff;border-right:1px solid #5a5a5a;border-bottom:1px solid #5a5a5a;box-shadow:inset -1px -1px 0 #a0a0a0"></div>
<div style="position:absolute;left:439px;top:281.5px;font-size:9.3px;line-height:1;color:#000;white-space:nowrap;">改变方向</div>
<div style="position:absolute;left:414px;top:304px;width:179px;height:154px;box-sizing:border-box;border:1px solid #808080;box-shadow:1px 1px 0 #fff inset, 1px 1px 0 #fff"></div>
<div style="position:absolute;left:418px;top:301px;font-size:9px;line-height:1;background:#d4d0c8;padding:0 1px;white-space:nowrap">重叠量的起始/终止点</div>
<div style="position:absolute;left:497px;top:314px;width:26px;height:13px;box-sizing:border-box;background:#fff;border-top:1px solid #808080;border-left:1px solid #808080;border-right:1px solid #fff;border-bottom:1px solid #fff;box-shadow:inset 1px 1px 0 #404040;"></div>
<div style="position:absolute;left:499px;top:317px;font-size:9px;line-height:1;color:#000;white-space:nowrap;">5</div>
<div style="position:absolute;left:450px;top:351px;width:106px;height:106px;background:#000"></div>
<svg style="position:absolute;left:450px;top:351px" width="107" height="105"><rect x="6" y="4.5" width="95" height="97" stroke="#30c030" fill="none" stroke-width="1.2"/><line x1="53.5" y1="4" x2="53.5" y2="101" stroke="#d0c840" stroke-width="0.9"/><line x1="55.5" y1="4" x2="55.5" y2="101" stroke="#d0c840" stroke-width="0.9"/><line x1="48" y1="13" x2="48" y2="85" stroke="#909090" stroke-width="1.2"/><path d="M45 70l4 4h-4z" fill="#c0c0c0"/></svg>
<div style="position:absolute;left:497px;top:434px;width:26px;height:13px;background:#fff"></div>
<div style="position:absolute;left:499px;top:436px;font-size:9px;line-height:1;color:#000;white-space:nowrap;">5</div>
<div style="position:absolute;left:528px;top:436px;width:9px;height:13px;background:#d4d0c8"></div>
<div style="position:absolute;left:479px;top:467px;width:49px;height:17px;box-sizing:border-box;background:#d4d0c8;border-top:1px solid #fff;border-left:1px solid #fff;border-right:1px solid #5a5a5a;border-bottom:1px solid #5a5a5a;box-shadow:inset -1px -1px 0 #a0a0a0"></div>
<div style="position:absolute;left:495px;top:471px;font-size:9px;line-height:1;color:#000;white-space:nowrap;">应用</div>
<div style="position:absolute;left:532px;top:467px;width:49px;height:17px;box-sizing:border-box;background:#d4d0c8;border-top:1px solid #fff;border-left:1px solid #fff;border-right:1px solid #5a5a5a;border-bottom:1px solid #5a5a5a;box-shadow:inset -1px -1px 0 #a0a0a0"></div>
<div style="position:absolute;left:548px;top:471px;font-size:9px;line-height:1;color:#000;white-space:nowrap;">关闭</div>
<div style="position:absolute;left:0px;top:502px;width:754px;height:1px;background:#a0a0a0"></div>
<div style="position:absolute;left:0px;top:503px;width:754px;height:1px;background:#fff"></div>
<div style="position:absolute;left:0px;top:504px;font-size:11.7px;line-height:1;color:#303030;white-space:nowrap;">请选择冲切位置</div>
<div style="position:absolute;left:133px;top:504px;font-size:11.7px;line-height:1;color:#303030;white-space:nowrap;">&lt;位置 &gt;</div>
<div style="position:absolute;left:538px;top:503px;width:1px;height:16px;background:#808080"></div>
<div style="position:absolute;left:543px;top:506px;font-size:12.4px;line-height:1;color:#3a3a3a;white-space:nowrap;">Xs:&nbsp;&nbsp;665.335 Ys:&nbsp;&nbsp;672.263</div>
<div style="position:absolute;left:0px;top:519px;width:754px;height:1px;background:#a0a0a0"></div>
<div style="position:absolute;left:0px;top:520px;width:754px;height:1px;background:#fff"></div>
<div style="position:absolute;left:560px;top:521px;width:1px;height:17px;background:#808080"></div>
<div style="position:absolute;left:560px;top:521px;width:123px;height:1px;background:#a0a0a0"></div>
<div style="position:absolute;left:682px;top:521px;width:1px;height:17px;background:#fff"></div>
<div style="position:absolute;left:684px;top:521px;width:1px;height:17px;background:#808080"></div>
<div style="position:absolute;left:684px;top:521px;width:14px;height:1px;background:#a0a0a0"></div>
<div style="position:absolute;left:697px;top:521px;width:1px;height:17px;background:#fff"></div>
<div style="position:absolute;left:699px;top:521px;width:1px;height:17px;background:#808080"></div>
<div style="position:absolute;left:699px;top:521px;width:17px;height:1px;background:#a0a0a0"></div>
<div style="position:absolute;left:715px;top:521px;width:1px;height:17px;background:#fff"></div>
<div style="position:absolute;left:717px;top:521px;width:1px;height:17px;background:#808080"></div>
<div style="position:absolute;left:717px;top:521px;width:17px;height:1px;background:#a0a0a0"></div>
<div style="position:absolute;left:733px;top:521px;width:1px;height:17px;background:#fff"></div>
<div style="position:absolute;left:735px;top:521px;width:1px;height:17px;background:#808080"></div>
<div style="position:absolute;left:735px;top:521px;width:19px;height:1px;background:#a0a0a0"></div>
<div style="position:absolute;left:753px;top:521px;width:1px;height:17px;background:#fff"></div>
<div style="position:absolute;left:700px;top:523px;width:15px;height:13px;overflow:hidden;font-size:12px;line-height:1;color:#303030">CA</div>
<div style="position:absolute;left:718px;top:523px;width:15px;height:13px;overflow:hidden;font-size:12px;line-height:1;color:#303030">NU</div>
</body></html>
